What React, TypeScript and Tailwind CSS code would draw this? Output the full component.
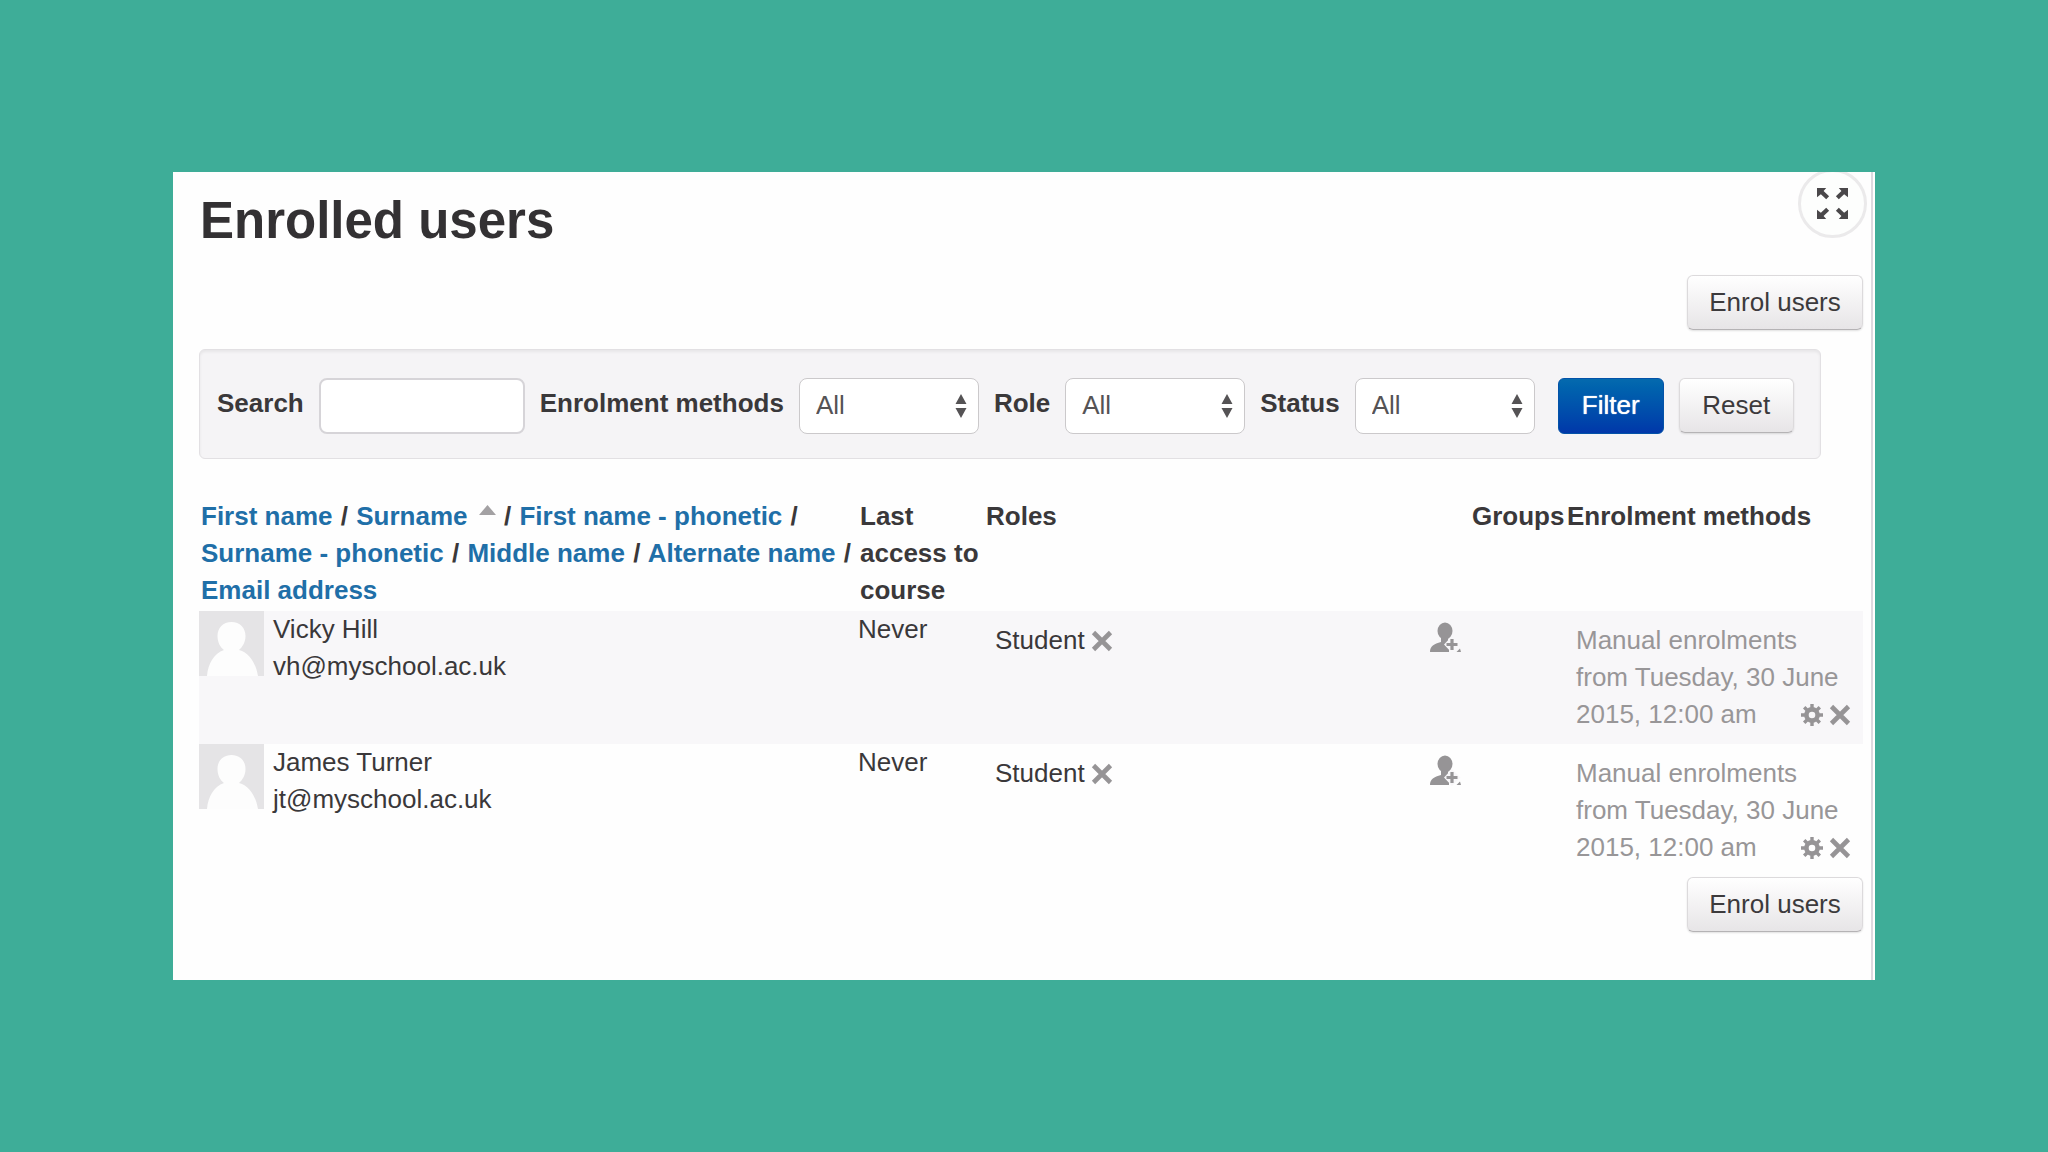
import React from 'react';

const USERS = [
  { id: 1, name: 'Vicky Hill', email: 'vh@myschool.ac.uk', lastAccess: 'Never', role: 'Student' },
  { id: 2, name: 'James Turner', email: 'jt@myschool.ac.uk', lastAccess: 'Never', role: 'Student' },
];

const buttonClass =
  'h-[55px] rounded-md border border-[#dcdadc] border-b-[#b5b3b5] bg-linear-to-b from-white to-[#e7e5e7] text-[#3c3a3c] shadow-[0_1px_2px_rgba(0,0,0,0.12)]';

const CrossIcon = () => (
  <svg width="22" height="22" viewBox="0 0 22 22" fill="none" stroke="#969496" strokeWidth="4.6">
    <path d="M2.500 2.500L19.500 19.500M19.500 2.500L2.500 19.500" />
  </svg>
);

const GearIcon = () => (
  <svg width="22" height="22" viewBox="0 0 22 22" fill="none" stroke="#969496">
    <circle cx="11" cy="11" r="5.6" strokeWidth="4.6" />
    <path d="M11 0V4M11 18V22M0 11H4M18 11H22M3.2 3.2L6 6M16 16L18.8 18.8M18.8 3.2L16 6M6 16L3.2 18.8" strokeWidth="3.4" />
  </svg>
);

const AssignRoleIcon = () => (
  <svg width="31" height="31" viewBox="0 0 31 31" fill="#969496">
    <ellipse cx="15" cy="9" rx="7.5" ry="8.6" />
    <path d="M11 15H18V20L15 23L19 27V30H0C0 24 4 22 11 20Z" />
    <path d="M22 14L30.500 22.500L22 31L14 22.500Z" fill="#f8f7f9" />
    <path d="M22 17V28M16.500 22.500H27.500" stroke="#969496" strokeWidth="3.2" />
    <path d="M26.500 30L30 26.500L31 30Z" />
  </svg>
);

const ExpandIcon = () => (
  <svg width="31" height="31" viewBox="0 0 32 32" fill="#4a484a">
    <path d="M0 0H9.500L6.800 3L12.500 8.500L9.500 11.500L4 6.500L0 9.500Z" />
    <path d="M32 0V9.500L28 6.500L22.500 11.500L19.500 8.500L25.200 3L22.500 0Z" />
    <path d="M0 32V22.500L4 25.500L9.500 20.500L12.500 23.500L6.800 29L9.500 32Z" />
    <path d="M32 32H22.500L25.200 29L19.500 23.500L22.500 20.500L28 25.500L32 22.500Z" />
  </svg>
);

const Avatar = () => (
  <svg width="65" height="65" viewBox="0 0 65 65" className="shrink-0">
    <rect width="65" height="65" fill="#e5e4e6" />
    <path
      d="M32.500 11C41 11 46.500 17 46.500 25C46.500 31 43.500 36 40 39C51 42 57 53 59 65H8C9 53 15 42 25 39C21 36 18.500 31 18.500 25C18.500 17 24 11 32.500 11Z"
      fill="#fdfdfd"
    />
  </svg>
);

const FilterSelect: React.FC<{ id: string; label: string }> = ({ id, label }) => (
  <>
    <label htmlFor={id} className="-mt-1 font-bold whitespace-nowrap">{label}</label>
    <div className="relative">
      <select
        id={id}
        className="block h-14 w-[180px] appearance-none rounded-lg border border-[#cbc9cb] bg-white pl-4 text-[#555355]"
      >
        <option>All</option>
      </select>
      <svg width="12" height="24" viewBox="0 0 12 24" fill="#555355" className="pointer-events-none absolute top-4 right-3">
        <path d="M6 0L11.500 10H0.500ZM6 24L0.500 14H11.500Z" />
      </svg>
    </div>
  </>
);

const SortLink: React.FC<{ children: React.ReactNode }> = ({ children }) => (
  <a href="#" className="text-[#1f6fa8]">{children}</a>
);

const Slash = () => <span className="mx-[1px]">/</span>;

const App: React.FC = () => {
  return (
    <div className="min-h-screen flex items-center bg-[#3ead98] px-[173px] font-['Liberation_Sans',Arial,sans-serif] text-[26px] leading-[37px] text-[#3a383a]">
      <main className="relative flex-1 overflow-hidden bg-white pr-[2px]">
        <div className="border-r-2 border-[#dddae0] bg-[#fefefe] pt-[19px] pr-2 pb-12 pl-[26px]">
          <h1 className="pl-[1px] text-[51px] leading-[60px] font-bold text-[#333133]">Enrolled users</h1>
          <button
            aria-label="Full screen"
            className="absolute -top-[3px] right-2 flex size-[69px] items-center justify-center rounded-full border-3 border-[#ebeaeb] bg-[#fdfefd]"
          >
            <ExpandIcon />
          </button>

          <div className="mt-6 flex justify-end">
            <button className={`${buttonClass} w-[176px]`}>Enrol users</button>
          </div>

          {/* Filters */}
          <form className="mt-[19px] mr-[42px] flex h-[110px] items-center gap-[15px] rounded-md border border-[#e2e0e3] bg-[#f5f4f6] pt-[3px] pl-[17px] shadow-[inset_0_2px_3px_rgba(0,0,0,0.06)]">
            <label htmlFor="search" className="-mt-1 font-bold">Search</label>
            <input id="search" type="text" className="h-14 w-[206px] rounded-lg border-2 border-[#d6d4d8] bg-white px-3" />
            <FilterSelect id="methods" label="Enrolment methods" />
            <FilterSelect id="role" label="Role" />
            <FilterSelect id="status" label="Status" />
            <button
              type="button"
              className="ml-2 h-14 w-[106px] rounded-md border border-[#0352a8] bg-linear-to-b from-[#056aae] to-[#0237a9] text-white text-shadow-[0_0_1px_#fff]"
            >
              Filter
            </button>
            <button type="reset" className={`${buttonClass} w-[115px]`}>Reset</button>
          </form>

          {/* Users */}
          <table className="mt-[39px] w-full table-fixed border-collapse text-left">
            <colgroup>
              <col className="w-[659px]" />
              <col className="w-[126px]" />
              <col />
              <col className="w-[94px]" />
              <col className="w-[297px]" />
            </colgroup>
            <thead>
              <tr className="align-top">
                <th className="pb-[2px] pl-[2px] whitespace-nowrap">
                  <SortLink>First name</SortLink> <Slash /> <SortLink>Surname</SortLink>{' '}
                  <svg width="17" height="10" viewBox="0 0 17 10" fill="#a3a1a3" className="ml-1 inline align-[10px]">
                    <path d="M8.500 0L17 10H0Z" />
                  </svg>{' '}
                  <Slash /> <SortLink>First name - phonetic</SortLink> <Slash /><br />
                  <SortLink>Surname - phonetic</SortLink> <Slash /> <SortLink>Middle name</SortLink> <Slash />{' '}
                  <SortLink>Alternate name</SortLink> <Slash /><br />
                  <SortLink>Email address</SortLink>
                </th>
                <th className="pl-[2px]">Last access to course</th>
                <th className="pl-[2px]">Roles</th>
                <th>Groups</th>
                <th className="pl-[1px]">Enrolment methods</th>
              </tr>
            </thead>
            <tbody>
              {USERS.map(u => (
                <tr key={u.id} className="h-[133px] align-top odd:bg-[#f8f7f9]">
                  <td>
                    <div className="flex gap-[9px]">
                      <Avatar />
                      <div>
                        <div>{u.name}</div>
                        <div>{u.email}</div>
                      </div>
                    </div>
                  </td>
                  <td>{u.lastAccess}</td>
                  <td className="px-[11px] pt-[11px]">
                    <div className="flex items-start justify-between">
                      <div className="flex items-center gap-[6px]">
                        {u.role}
                        <button aria-label="Unassign role"><CrossIcon /></button>
                      </div>
                      <button aria-label="Assign roles"><AssignRoleIcon /></button>
                    </div>
                  </td>
                  <td />
                  <td className="pt-[11px] pl-[10px] text-[#989698]">
                    Manual enrolments
                    <br />
                    from Tuesday, 30 June
                    <div className="flex items-center justify-between pr-3">
                      2015, 12:00 am
                      <span className="flex gap-[6px]">
                        <button aria-label="Edit enrolment"><GearIcon /></button>
                        <button aria-label="Unenrol"><CrossIcon /></button>
                      </span>
                    </div>
                  </td>
                </tr>
              ))}
            </tbody>
          </table>

          <div className="flex justify-end">
            <button className={`${buttonClass} w-[176px]`}>Enrol users</button>
          </div>
        </div>
      </main>
    </div>
  );
};

export default App;
